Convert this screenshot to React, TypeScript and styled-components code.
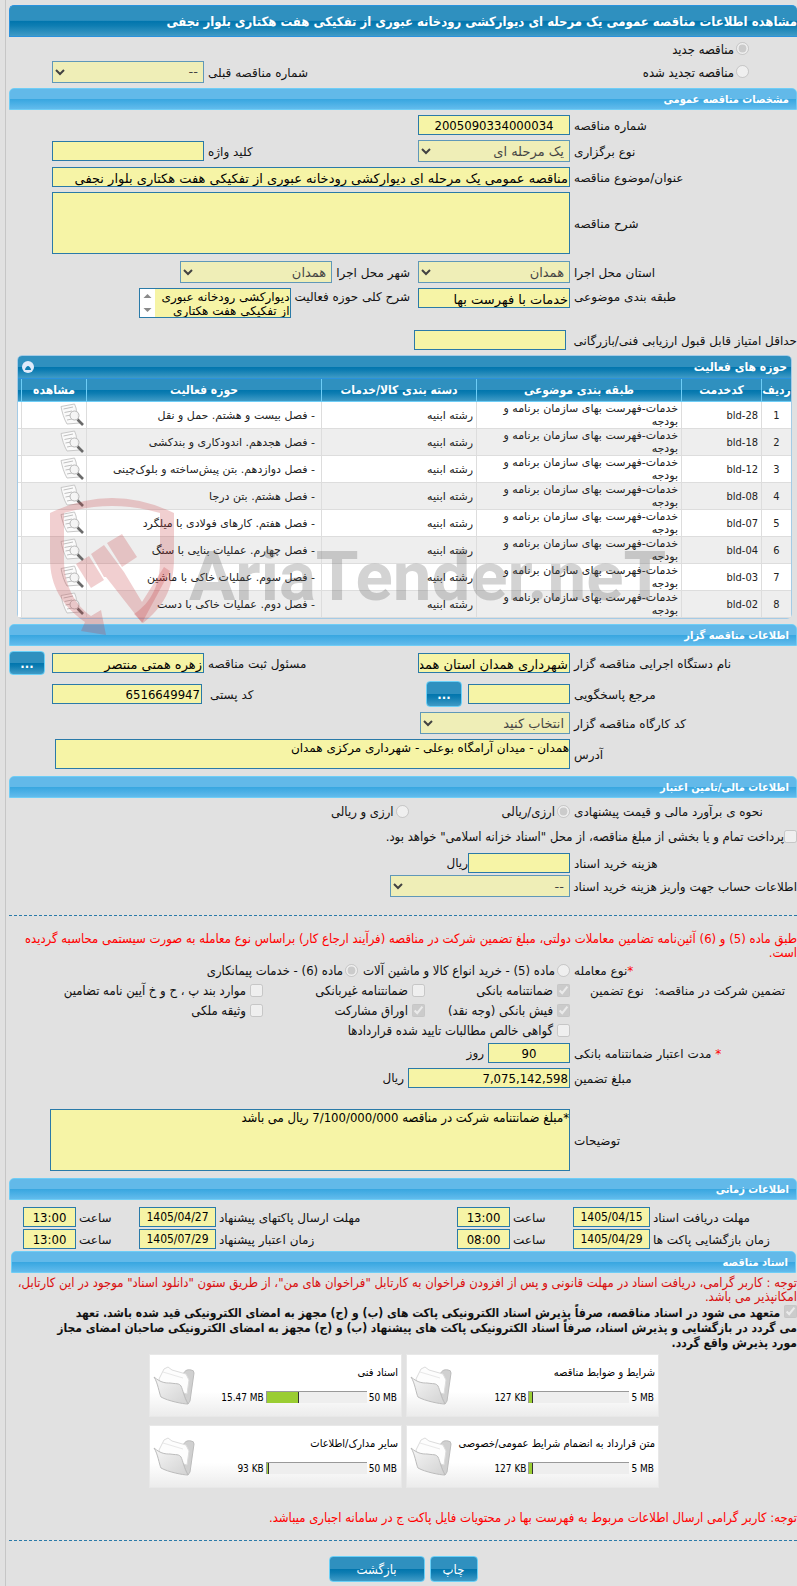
import React from "react";
import styled, { createGlobalStyle, css } from "styled-components";

const FONT = `"DejaVu Sans", sans-serif`;
const NARROW = `"DejaVu Sans Condensed", "DejaVu Sans", sans-serif`;

const GlobalStyle = createGlobalStyle`
  *, *::before, *::after { box-sizing: border-box; }
  body {
    margin: 0;
    background: #e1e1e1;
    color: #111;
    font: 12px/14px ${FONT};
    overflow-x: hidden;
  }
  input[type="radio"], input[type="checkbox"] { width: 13px; height: 13px; margin: 0; flex: none; }
`;

const Page = styled.main`
  direction: rtl;
  margin-left: 5px;
  padding: 5px 0 5px 3px;
  border-left: 1px solid #c6c6c6;
  display: flex;
  flex-direction: column;
`;

const glossBlue = css`
  background: linear-gradient(#2f90bf 0%, #2f90bf 48%, #0075ad 50%, #0e7db2 65%, #409bc6 100%);
`;

const TitleBar = styled.h1`
  ${glossBlue}
  margin: 0;
  height: 32px;
  border: 1px solid #2a92dd;
  border-right: 0;
  border-radius: 5px 5px 0 0;
  color: #fff;
  font-family: ${NARROW};
  font-size: 13px;
  line-height: 32px;
  white-space: nowrap;
`;

const SectionBar = styled.h2<{ $gap?: number; $inset?: boolean }>`
  margin: ${(p) => p.$gap ?? 0}px ${(p) => (p.$inset ? 1 : 0)}px 0 ${(p) => (p.$inset ? 2 : 0)}px;
  height: 22px;
  padding: 0 7px;
  border: 1px solid #6ecdf6;
  border-radius: 5px 5px 0 0;
  background: linear-gradient(#62b9e9 0%, #62b9e9 48%, #37a6e0 50%, #62bbec 100%);
  color: #fff;
  font-family: ${NARROW};
  font-size: 11px;
  line-height: 22px;
`;

const Row = styled.div<{ $gap?: number; $top?: boolean }>`
  display: grid;
  grid-template-columns: 227px minmax(0, 1fr);
  align-items: ${(p) => (p.$top ? "start" : "center")};
  margin-top: ${(p) => p.$gap ?? 5}px;
`;

const Label = styled.label`
  padding: 2px 0 0 4px;
  text-align: left;
  white-space: nowrap;
`;

const Fields = styled.div<{ $tail?: number; $top?: boolean; $indent?: number }>`
  display: flex;
  align-items: ${(p) => (p.$top ? "start" : "center")};
  padding-left: ${(p) => p.$tail ?? 43}px;
  padding-right: ${(p) => p.$indent ?? 0}px;
`;

const SideLabel = styled.label<{ $push?: boolean }>`
  margin-right: ${(p) => (p.$push ? "auto" : "8px")};
  padding: 2px 0 0 4px;
  white-space: nowrap;
`;

const fieldSkin = css`
  background: #f6f4a6;
  border: 1px solid #2a7aa8;
  border-radius: 0;
  color: #000;
  font-family: ${FONT};
  font-size: 13px;
`;

const TextInput = styled.input<{ $w?: number; $center?: boolean; $digits?: boolean; $size?: number }>`
  ${fieldSkin}
  width: ${(p) => (p.$w ? `${p.$w}px` : "100%")};
  height: 20px;
  padding: ${(p) => (p.$digits ? "0 1px" : "2px 1px 0")};
  flex: none;
  font-family: ${(p) => (p.$digits ? NARROW : FONT)};
  font-size: ${(p) => p.$size ?? 13}px;
  text-align: ${(p) => (p.$center ? "center" : "right")};
`;

const TextArea = styled.textarea<{ $h: number }>`
  ${fieldSkin}
  display: block;
  width: 100%;
  height: ${(p) => p.$h}px;
  padding: 1px 0;
  font-size: 12px;
  line-height: 14px;
  resize: none;
`;

const NoteArea = styled(TextArea)`
  font-family: ${NARROW};
  font-size: 13px;
`;

const ScrollBox = styled.div`
  display: flex;
  width: 152px;
  flex: none;
  border: 1px solid #2a7aa8;
  background: #fff;
`;

const ScrollText = styled(TextArea)`
  width: 135px;
  border: 0;
  overflow: hidden;
`;

const Select = styled.select<{ $w: number }>`
  ${fieldSkin}
  width: ${(p) => p.$w}px;
  height: 22px;
  padding: 0 1px;
  flex: none;
  opacity: 0.7;
  &:disabled { color: #000; }
`;

const Button = styled.button<{ $w: number; $h?: number }>`
  ${glossBlue}
  width: ${(p) => p.$w}px;
  height: ${(p) => p.$h ?? 26}px;
  flex: none;
  padding: 0;
  border: 1px solid #6bd0f7;
  border-radius: 4px;
  color: #fff;
  font: 13px ${NARROW};
`;

const MoreButton = styled(Button)`
  font-weight: bold;
`;

const Spacer = styled.span<{ $w: number }>`
  width: ${(p) => p.$w}px;
  flex: none;
`;

const Choice = styled.label<{ $gap?: number; $start?: number }>`
  display: flex;
  align-items: center;
  gap: ${(p) => p.$gap ?? 2}px;
  margin-right: ${(p) => p.$start ?? 0}px;
  font-family: ${NARROW};
  font-size: 13px;
  white-space: nowrap;
  span { padding-top: 2px; }
`;

const ModeRow = styled.div`
  display: grid;
  grid-template-columns: 48px 1fr auto 152px 43px;
  align-items: center;
  height: 23px;
`;

const TreasuryRow = styled.div`
  display: flex;
  margin-top: 9px;
  font-family: ${FONT};
`;

const Panel = styled.section`
  position: relative;
  margin: 5px 5px 0 8px;
  border: 1px solid #a5cbe6;
  border-radius: 5px;
  background: #fff;
`;

const PanelTitle = styled.header`
  ${glossBlue}
  display: flex;
  align-items: center;
  justify-content: space-between;
  height: 23px;
  padding: 0 4px;
  border-radius: 4px 4px 0 0;
  border-bottom: 1px solid #2a92dd;
  color: #fff;
  font-family: ${NARROW};
  font-size: 12px;
  font-weight: bold;
`;

const Collapse = styled.button`
  width: 12px;
  height: 12px;
  padding: 0;
  border: 0;
  border-radius: 6px;
  background: #dfeafa;
  display: grid;
  place-items: center;
`;

const Table = styled.table`
  width: 100%;
  border-collapse: separate;
  border-spacing: 0;
  table-layout: fixed;
  font-size: 11px;
  line-height: 13px;
  color: #222;
  th {
    ${glossBlue}
    height: 23px;
    padding: 0;
    border-left: 1px solid #6ecdf6;
    border-bottom: 1px solid #6ecdf6;
    color: #fff;
    font-family: ${NARROW};
    font-size: 12px;
    white-space: nowrap;
  }
  td {
    height: 27px;
    padding: 0 3px;
    border-left: 1px solid #ddd;
    border-bottom: 1px solid #ddd;
    vertical-align: middle;
    text-align: right;
  }
  th:last-child, td:last-child { border-left: 0; }
  td:first-child, td:nth-child(2) { font-family: ${NARROW}; }
  td:first-child { text-align: center; }
  td:nth-child(5) { padding-right: 6px; }
  td:nth-child(6) { padding: 0 2px 0 0; }
  tbody tr:nth-child(even) td { background: #eee; }
  tbody tr td:last-child { background: #fff; }
  svg { display: block; }
`;

const Watermark = styled.div`
  position: absolute;
  left: 32px;
  bottom: -20px;
  width: 620px;
  pointer-events: none;
  svg { display: block; }
`;

const Divider = styled.hr<{ $gap: number }>`
  width: 100%;
  margin: ${(p) => p.$gap}px 0 0;
  border: 0;
  border-top: 1px dashed #2a7aa8;
`;

const Notice = styled.p<{ $gap: number; $tone?: string }>`
  margin: ${(p) => p.$gap}px 0 0;
  color: ${(p) => p.$tone ?? "#f00"};
  font-family: ${NARROW};
  font-size: 13px;
`;

const Pledge = styled.label`
  margin-top: 1px;
  font-family: ${NARROW};
  font-weight: bold;
  line-height: 15px;
  input { vertical-align: -1px; }
`;

const CheckGrid = styled.div`
  display: grid;
  grid-template-columns: 145px 162px minmax(0, 1fr);
  grid-auto-rows: 20px;
`;

const GuaranteeTitle = styled.div`
  display: flex;
  align-self: start;
  justify-content: space-between;
  padding: 4px 12px 0 20px;
`;

const Star = styled.span`
  color: #f00;
`;

const DateGrid = styled.div`
  display: grid;
  grid-template-columns: 147px 77px 63px 53px minmax(0, 1fr) 77px 63px 53px 14px;
  grid-auto-rows: 20px;
  gap: 2px 0;
  margin-top: 7px;
  align-items: center;
`;

const DateLabel = styled.label<{ $first?: boolean }>`
  padding: 2px 0 0 3px;
  text-align: left;
  white-space: nowrap;
  grid-column-start: ${(p) => (p.$first ? 1 : "auto")};
`;

const Files = styled.div`
  display: grid;
  grid-template-columns: 253px 253px;
  justify-content: center;
  gap: 8px 4px;
  margin: 3px 0 0 2px;
`;

const FileCard = styled.article`
  display: grid;
  grid-template-columns: minmax(0, 1fr) 42px;
  height: 63px;
  padding: 0 3px;
  border: 1px solid #e8e8e8;
  background: linear-gradient(#fff 60%, #ececec);
  color: #000;
  font-family: ${NARROW};
  font-size: 11px;
`;

const FileInfo = styled.div`
  padding-top: 11px;
  white-space: nowrap;
`;

const Usage = styled.div`
  display: flex;
  gap: 2px;
  margin-top: 11px;
  padding-right: 1px;
  font-size: 10px;
`;

const Track = styled.div`
  display: flex;
  direction: ltr;
  width: 101px;
  height: 12px;
  border: 1px solid #999;
  border-right: 0;
  border-bottom: 0;
  background: #eee;
`;

const Fill = styled.div`
  background: #9acd32;
  border-right: 1px solid #333;
`;

const FolderBox = styled.div`
  padding-top: 11px;
`;

const Actions = styled.div`
  display: flex;
  justify-content: center;
  gap: 5px;
  margin-top: 15px;
`;

const ScrollArrows = () => (
  <svg width="15" height="28" viewBox="0 0 15 28" fill="#8a8a8a" aria-hidden>
    <path d="M3.500 9L7.500 5L11.500 9Z" />
    <path d="M3.500 19L7.500 23L11.500 19Z" />
  </svg>
);

const SheetIcon = () => (
  <svg width="24" height="24" viewBox="0 0 24 24" fill="none">
    <path d="M1 3.500L14.500 1L16 5C17 11 19 17 20 20L7 21C4 16 2 9 1 3.500Z" fill="#fafafa" stroke="#c8c8c8" />
    <path d="M3.500 6L13 4M4.500 9.500L12 8M5.500 13L11 12M7 17L12 16" stroke="#c0c0c0" />
    <circle cx="14.500" cy="12.500" r="4.500" fill="#f4f4f4" fillOpacity=".8" stroke="#b8b8b8" />
    <path d="M17.500 16.500L23 22" stroke="#6a6a6a" strokeWidth="2.600" />
  </svg>
);

const FolderIcon = () => (
  <svg width="42" height="42" viewBox="0 0 42 42">
    <defs>
      <linearGradient id="front" x1="0" y1="0" x2="1" y2="1">
        <stop offset="0" stopColor="#f6f6f6" />
        <stop offset="1" stopColor="#d2d2d2" />
      </linearGradient>
    </defs>
    <path d="M30 9C31 5 34 3 38 4Q41 4 41 7L37 35L35 38L31 30Z" fill="#d0d0d0" stroke="#bcbcbc" />
    <path d="M6 13L11 3L15 1L19 4L33 8L36 14L34 28L8 20Z" fill="#fdfdfd" stroke="#dcdcdc" />
    <path d="M10 6L30 12" stroke="#e8e8e8" fill="none" />
    <path d="M1 11C8 17 13 17 17 17C23 18 26 17 28 20C30 24 31 31 35 38C30 38 15 35 8 31C6 27 5 17 1 11Z" fill="url(#front)" stroke="#bcbcbc" />
  </svg>
);

const SERVICES = [
  ["bld-28", "- فصل بیست و هشتم. حمل و نقل"],
  ["bld-18", "- فصل هجدهم. اندودکاری و بندکشی"],
  ["bld-12", "- فصل دوازدهم. بتن پیش‌ساخته و بلوک‌چینی"],
  ["bld-08", "- فصل هشتم. بتن درجا"],
  ["bld-07", "- فصل هفتم. کارهای فولادی با میلگرد"],
  ["bld-04", "- فصل چهارم. عملیات بنایی با سنگ"],
  ["bld-03", "- فصل سوم. عملیات خاکی با ماشین"],
  ["bld-02", "- فصل دوم. عملیات خاکی با دست"],
];

const FILES = [
  { title: "شرایط و ضوابط مناقصه", used: "127 KB", limit: "5 MB", share: 4 },
  { title: "اسناد فنی", used: "15.47 MB", limit: "50 MB", share: 32 },
  { title: "متن قرارداد به انضمام شرایط عمومی/خصوصی", used: "127 KB", limit: "5 MB", share: 4 },
  { title: "سایر مدارک/اطلاعات", used: "93 KB", limit: "50 MB", share: 2 },
];

const DATES = [
  ["مهلت دریافت اسناد", "1405/04/15", "13:00", "مهلت ارسال پاکتهای پیشنهاد", "1405/04/27", "13:00"],
  ["زمان بازگشایی پاکت ها", "1405/04/29", "08:00", "زمان اعتبار پیشنهاد", "1405/07/29", "13:00"],
];

type CheckProps = { text: string; checked?: boolean };
const Check = ({ text, checked }: CheckProps) => (
  <Choice $gap={4}>
    <input type="checkbox" disabled defaultChecked={checked} />
    <span>{text}</span>
  </Choice>
);

export default function App() {
  return (
    <Page dir="rtl" lang="fa">
      <GlobalStyle />
      <TitleBar>مشاهده اطلاعات مناقصه عمومی یک مرحله ای دیوارکشی رودخانه عبوری از تفکیکی هفت هکتاری بلوار نجفی</TitleBar>
      <ModeRow>
        <span />
        <Choice>
          <input type="radio" name="mode" disabled defaultChecked />
          <span>مناقصه جدید</span>
        </Choice>
      </ModeRow>
      <ModeRow>
        <span />
        <Choice>
          <input type="radio" name="mode" disabled />
          <span>مناقصه تجدید شده</span>
        </Choice>
        <SideLabel htmlFor="prev">شماره مناقصه قبلی</SideLabel>
        <Select id="prev" $w={152} disabled><option>--</option></Select>
      </ModeRow>

      <SectionBar $gap={5}>مشخصات مناقصه عمومی</SectionBar>
      <Row>
        <Label htmlFor="num">شماره مناقصه</Label>
        <Fields><TextInput id="num" $w={152} $center $digits readOnly value="2005090334000034" /></Fields>
      </Row>
      <Row>
        <Label htmlFor="kind">نوع برگزاری</Label>
        <Fields>
          <Select id="kind" $w={152} disabled><option>یک مرحله ای</option></Select>
          <SideLabel $push htmlFor="keyword">کلید واژه</SideLabel>
          <TextInput id="keyword" $w={152} readOnly value="" />
        </Fields>
      </Row>
      <Row>
        <Label htmlFor="subject">عنوان/موضوع مناقصه</Label>
        <Fields>
          <TextInput id="subject" readOnly value="مناقصه عمومی یک مرحله ای دیوارکشی رودخانه عبوری از تفکیکی هفت هکتاری بلوار نجفی" />
        </Fields>
      </Row>
      <Row>
        <Label htmlFor="about">شرح مناقصه</Label>
        <Fields><TextArea id="about" $h={62} readOnly value="" /></Fields>
      </Row>
      <Row $gap={7}>
        <Label htmlFor="province">استان محل اجرا</Label>
        <Fields>
          <Select id="province" $w={152} disabled><option>همدان</option></Select>
          <SideLabel htmlFor="city">شهر محل اجرا</SideLabel>
          <Select id="city" $w={152} disabled><option>همدان</option></Select>
        </Fields>
      </Row>
      <Row $top>
        <Label htmlFor="class">طبقه بندی موضوعی</Label>
        <Fields $top>
          <TextInput id="class" $w={152} readOnly value="خدمات با فهرست بها" />
          <SideLabel htmlFor="area">شرح کلی حوزه فعالیت</SideLabel>
          <ScrollBox>
            <ScrollText id="area" $h={28} readOnly value="دیوارکشی رودخانه عبوری از تفکیکی هفت هکتاری بلوار نجفی" />
            <ScrollArrows />
          </ScrollBox>
        </Fields>
      </Row>
      <Row $gap={12}>
        <Label htmlFor="score">حداقل امتیاز قابل قبول ارزیابی فنی/بازرگانی</Label>
        <Fields $indent={4}><TextInput id="score" $w={152} readOnly value="" /></Fields>
      </Row>

      <Panel>
        <PanelTitle>
          حوزه های فعالیت
          <Collapse aria-label="جمع کردن">
            <svg width="8" height="5" viewBox="0 0 8 5"><path d="M1 5C1 3 3 1 4 1S7 3 7 5Z" fill="#0e7db2" /></svg>
          </Collapse>
        </PanelTitle>
        <Table>
          <colgroup>
            <col style={{ width: 30 }} />
            <col style={{ width: 80 }} />
            <col style={{ width: 205 }} />
            <col style={{ width: 155 }} />
            <col />
            <col style={{ width: 65 }} />
            <col style={{ width: 3 }} />
          </colgroup>
          <thead>
            <tr>
              <th>ردیف</th><th>کدخدمت</th><th>طبقه بندی موضوعی</th><th>دسته بندی کالا/خدمات</th><th>حوزه فعالیت</th><th>مشاهده</th><th />
            </tr>
          </thead>
          <tbody>
            {SERVICES.map(([code, name], i) => (
              <tr key={code}>
                <td>{i + 1}</td>
                <td><bdi>{code}</bdi></td>
                <td>خدمات-فهرست بهای سازمان برنامه و بودجه</td>
                <td>رشته ابنیه</td>
                <td>{name}</td>
                <td><SheetIcon /></td>
                <td />
              </tr>
            ))}
          </tbody>
        </Table>
        <Watermark aria-hidden>
          <svg width="620" height="140" viewBox="0 0 620 140" direction="ltr">
            <g fill="#c4383c" fillOpacity=".24">
              <path fillRule="evenodd" d="M0 15Q62-15 124 15V60C124 92 112 110 93 125L84 116C102 104 110 86 110 62V15Q62 1 14 15V62C14 88 26 108 41 118L51 112L56 137L31 133L35 124C12 108 0 88 0 60Z" />
              <path d="M57 45L72 36L87 59L72 69ZM41 56L54 47L71 70L74 74L92 104L114 69L120 73L92 125L56 79L54 79ZM26 66L39 58L54 82L41 90Z" />
            </g>
            <text x="139" y="102" fontFamily="Roboto, sans-serif" fontSize="69" fontWeight="bold" fill="#555" fillOpacity=".26">AriaTender.neT</text>
          </svg>
        </Watermark>
      </Panel>

      <SectionBar $gap={5}>اطلاعات مناقصه گزار</SectionBar>
      <Row>
        <Label htmlFor="org">نام دستگاه اجرایی مناقصه گزار</Label>
        <Fields $tail={0}>
          <TextInput id="org" $w={152} readOnly value="شهرداری همدان استان همدان" />
          <SideLabel $push htmlFor="owner">مسئول ثبت مناقصه</SideLabel>
          <TextInput id="owner" $w={152} readOnly value="زهره همتی منتصر" />
          <Spacer $w={7} />
          <MoreButton $w={36} $h={24}>...</MoreButton>
        </Fields>
      </Row>
      <Row $gap={6}>
        <Label htmlFor="contact">مرجع پاسخگویی</Label>
        <Fields>
          <TextInput id="contact" $w={102} readOnly value="" />
          <Spacer $w={6} />
          <MoreButton $w={36}>...</MoreButton>
          <SideLabel $push htmlFor="post">کد پستی</SideLabel>
          <Spacer $w={4} />
          <TextInput id="post" $w={150} $digits readOnly value="6516649947" />
        </Fields>
      </Row>
      <Row>
        <Label htmlFor="workshop">کد کارگاه مناقصه گزار</Label>
        <Fields><Select id="workshop" $w={150} disabled><option>انتخاب کنید</option></Select></Fields>
      </Row>
      <Row>
        <Label htmlFor="address">آدرس</Label>
        <Fields $tail={46}>
          <TextArea id="address" $h={30} readOnly value="همدان - میدان آرامگاه بوعلی - شهرداری مرکزی همدان" />
        </Fields>
      </Row>

      <SectionBar $gap={7}>اطلاعات مالی/تامین اعتبار</SectionBar>
      <Row>
        <Label as="span">نحوه ی برآورد مالی و قیمت پیشنهادی</Label>
        <Fields>
          <Choice><input type="radio" name="cur" disabled defaultChecked /><span>ارزی/ریالی</span></Choice>
          <Choice $start={93}><input type="radio" name="cur" disabled /><span>ارزی و ریالی</span></Choice>
        </Fields>
      </Row>
      <TreasuryRow>
        <Choice $gap={0}>
          <input type="checkbox" disabled />
          <span>پرداخت تمام و یا بخشی از مبلغ مناقصه، از محل "اسناد خزانه اسلامی" خواهد بود.</span>
        </Choice>
      </TreasuryRow>
      <Row $gap={9}>
        <Label htmlFor="fee">هزینه خرید اسناد</Label>
        <Fields><TextInput id="fee" $w={102} readOnly value="" /><span>ریال</span></Fields>
      </Row>
      <Row $gap={2}>
        <Label htmlFor="account">اطلاعات حساب جهت واریز هزینه خرید اسناد</Label>
        <Fields><Select id="account" $w={180} disabled><option>--</option></Select></Fields>
      </Row>
      <Divider $gap={18} />

      <Notice $gap={16}>
        طبق ماده (5) و (6) آئین‌نامه تضامین معاملات دولتی، مبلغ تضمین شرکت در مناقصه (فرآیند ارجاع کار) براساس نوع معامله به صورت سیستمی محاسبه گردیده است.
      </Notice>
      <Row $gap={2}>
        <Label as="span"><Star>*</Star>نوع معامله</Label>
        <Fields>
          <Choice><input type="radio" name="deal" disabled /><span>ماده (5) - خرید انواع کالا و ماشین آلات</span></Choice>
          <Choice $start={5}><input type="radio" name="deal" disabled defaultChecked /><span>ماده (6) - خدمات پیمانکاری</span></Choice>
        </Fields>
      </Row>
      <Row $gap={2}>
        <GuaranteeTitle><span>تضمین شرکت در مناقصه:</span><span>نوع تضمین</span></GuaranteeTitle>
        <CheckGrid>
          <Check text="ضمانتنامه بانکی" checked />
          <Check text="ضمانتنامه غیربانکی" />
          <Check text="موارد بند پ ، ح و خ آیین نامه تضامین" />
          <Check text="فیش بانکی (وجه نقد)" checked />
          <Check text="اوراق مشارکت" checked />
          <Check text="وثیقه ملکی" />
          <Check text="گواهی خالص مطالبات تایید شده قراردادها" />
        </CheckGrid>
      </Row>
      <Row $gap={3}>
        <Label htmlFor="days"><Star>* </Star>مدت اعتبار ضمانتنامه بانکی</Label>
        <Fields><TextInput id="days" $w={82} $center $digits readOnly value="90" /><Spacer $w={4} /><span>روز</span></Fields>
      </Row>
      <Row>
        <Label htmlFor="amount">مبلغ تضمین</Label>
        <Fields><TextInput id="amount" $w={162} $digits readOnly value="7,075,142,598" /><Spacer $w={4} /><span>ریال</span></Fields>
      </Row>
      <Row $gap={21}>
        <Label htmlFor="notes">توضیحات</Label>
        <Fields $tail={41}>
          <NoteArea id="notes" $h={62} readOnly value="*مبلغ ضمانتنامه شرکت در مناقصه 7/100/000/000 ریال می باشد" />
        </Fields>
      </Row>

      <SectionBar $gap={7}>اطلاعات زمانی</SectionBar>
      <DateGrid>
        {DATES.map(([a, aDate, aTime, b, bDate, bTime], i) => (
          <React.Fragment key={a}>
            <DateLabel $first htmlFor={`a${i}`}>{a}</DateLabel>
            <TextInput id={`a${i}`} $center $digits readOnly value={aDate} $size={12} />
            <DateLabel htmlFor={`at${i}`}>ساعت</DateLabel>
            <TextInput id={`at${i}`} $center $digits readOnly value={aTime} />
            <DateLabel htmlFor={`b${i}`}>{b}</DateLabel>
            <TextInput id={`b${i}`} $center $digits readOnly value={bDate} $size={12} />
            <DateLabel htmlFor={`bt${i}`}>ساعت</DateLabel>
            <TextInput id={`bt${i}`} $center $digits readOnly value={bTime} />
          </React.Fragment>
        ))}
      </DateGrid>

      <SectionBar $gap={2} $inset>اسناد مناقصه</SectionBar>
      <Notice $gap={3} $tone="#d90f0f">
        توجه : کاربر گرامی، دریافت اسناد در مهلت قانونی و پس از افزودن فراخوان به کارتابل "فراخوان های من"، از طریق ستون "دانلود اسناد" موجود در این کارتابل، امکانپذیر می باشد.
      </Notice>
      <Pledge>
        <input type="checkbox" disabled defaultChecked /> متعهد می شود در اسناد مناقصه، صرفاً پذیرش اسناد الکترونیکی پاکت های (ب) و (ج) مجهز به امضای الکترونیکی قید شده باشد. تعهد
        <br />
        می گردد در بازگشایی و پذیرش اسناد، صرفاً اسناد الکترونیکی پاکت های پیشنهاد (ب) و (ج) مجهز به امضای الکترونیکی صاحبان امضای مجاز
        <br />
        مورد پذیرش واقع گردد.
      </Pledge>
      <Files>
        {FILES.map((f) => (
          <FileCard key={f.title}>
            <FileInfo>
              {f.title}
              <Usage>
                <bdi>{f.limit}</bdi>
                <Track><Fill style={{ width: `${f.share}%` }} /></Track>
                <bdi>{f.used}</bdi>
              </Usage>
            </FileInfo>
            <FolderBox><FolderIcon /></FolderBox>
          </FileCard>
        ))}
      </Files>
      <Notice $gap={23}>توجه: کاربر گرامی ارسال اطلاعات مربوط به فهرست بها در محتویات فایل پاکت ج در سامانه اجباری میباشد.</Notice>
      <Divider $gap={15} />
      <Actions>
        <Button $w={48}>چاپ</Button>
        <Button $w={96}>بازگشت</Button>
      </Actions>
    </Page>
  );
}
